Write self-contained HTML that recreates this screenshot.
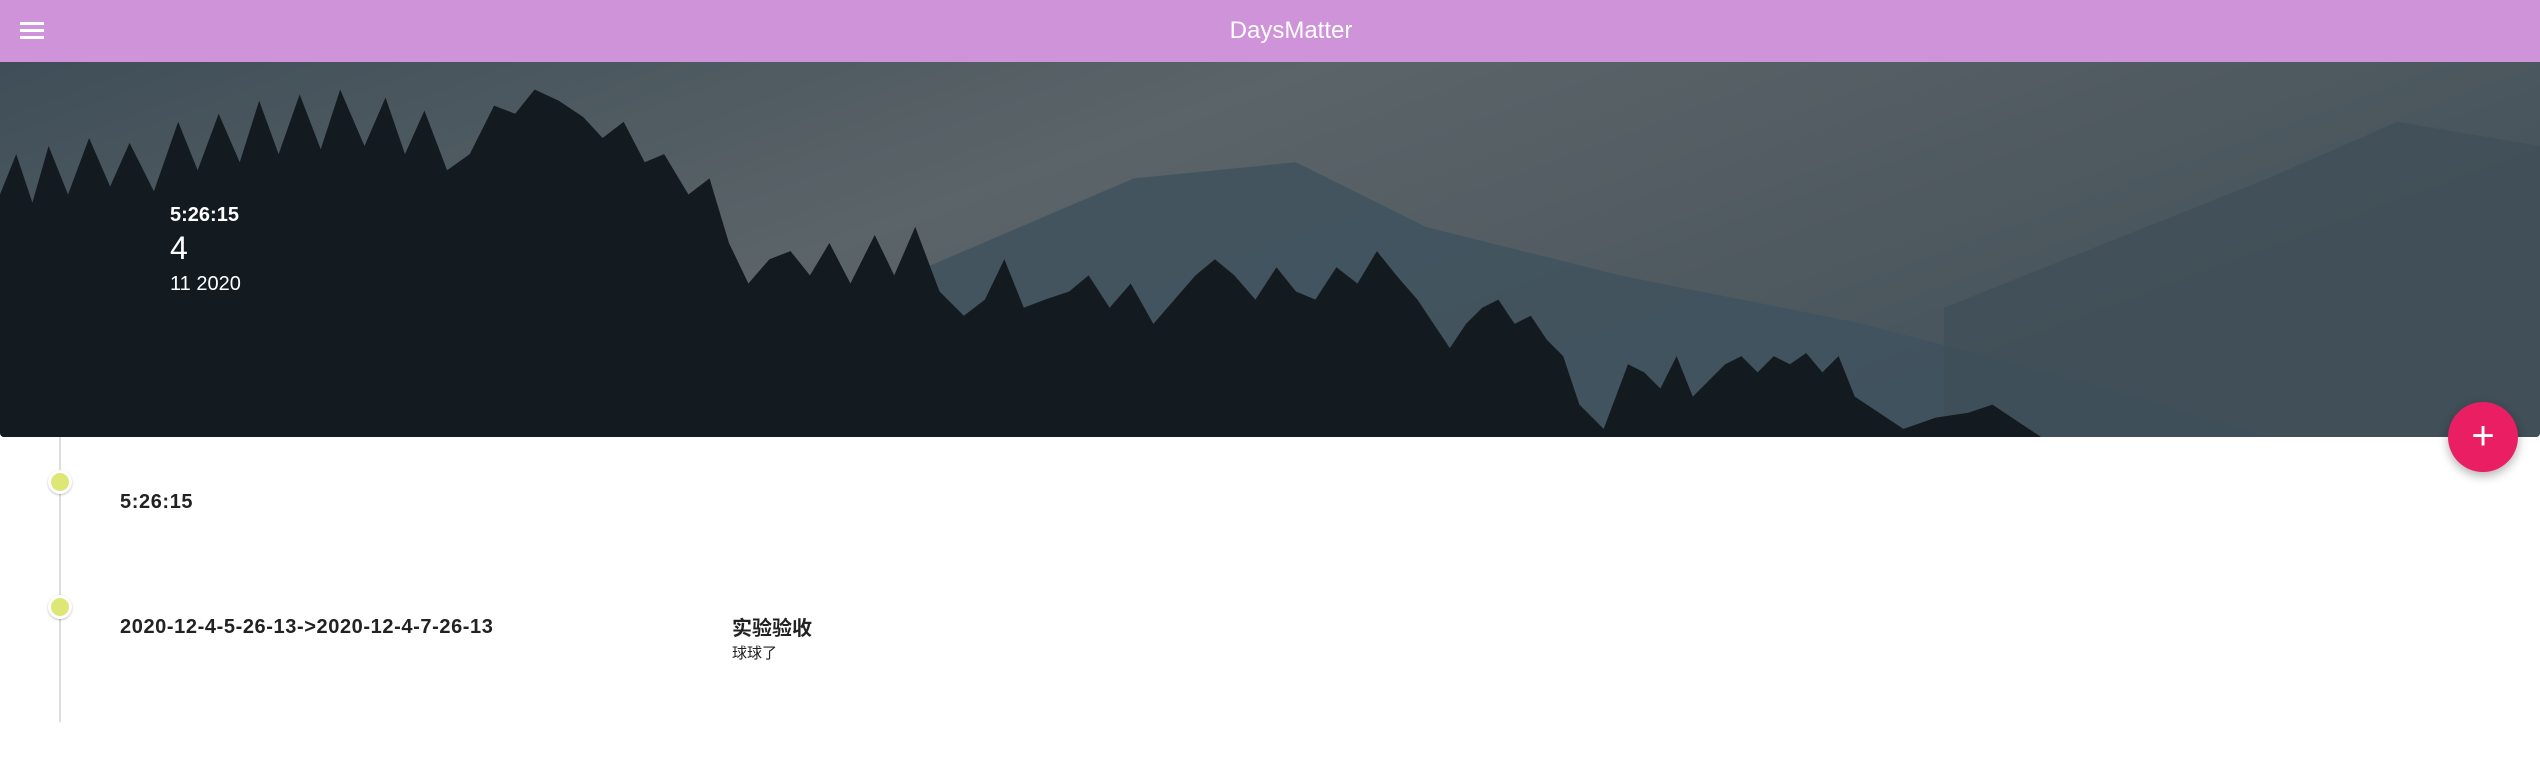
<!DOCTYPE html>
<html><head><meta charset="utf-8"><style>
*{margin:0;padding:0;box-sizing:border-box}
body{width:2540px;height:784px;background:#fff;font-family:"Liberation Sans","Noto Sans CJK SC",sans-serif;position:relative;overflow:hidden}
.bar{position:absolute;left:0;top:0;width:2540px;height:62px;background:#ce93d8;color:#fff}
.bar .t{position:absolute;left:42px;right:0;top:17px;text-align:center;font-size:24px}
.ham{position:absolute;left:20px;top:22px;width:24px}
.ham i{display:block;height:3px;background:#fff;margin-bottom:4px}
.hero{position:absolute;left:0;top:62px;width:2540px;height:375px;overflow:hidden;border-radius:0 0 4px 4px}
.ht{position:absolute;color:#fff;left:170px}
.line{position:absolute;left:59px;top:437px;width:2px;height:285px;background:#ddd}
.dot{position:absolute;left:48px;width:24px;height:24px;border-radius:50%;background:#dce775;border:3px solid #fff;box-shadow:0 1px 2px rgba(0,0,0,.25)}
.tx{position:absolute;font-size:20px;font-weight:bold;color:#222;letter-spacing:.6px}
.fab{position:absolute;left:2448px;top:402px;width:70px;height:70px;border-radius:50%;background:#e91e63;box-shadow:0 4px 10px rgba(0,0,0,.3);color:#fff;font-size:40px;text-align:center;line-height:68px}
</style></head><body>
<div class="hero">
<svg width="2540" height="375" viewBox="0 38 1568 232" preserveAspectRatio="none">
<defs><linearGradient id="s" x1="0" y1="0" x2="1" y2="0.4"><stop offset="0" stop-color="#3f4e58"/><stop offset=".45" stop-color="#5b6468"/><stop offset=".7" stop-color="#525c62"/><stop offset="1" stop-color="#46535b"/></linearGradient></defs>
<rect x="0" y="38" width="1568" height="232" fill="url(#s)"/>
<path d="M560 170 L700 110 L800 100 L880 140 L1000 170 L1150 200 L1300 240 L1400 270 L560 270Z" fill="#3f525e" opacity=".85"/>
<path d="M1200 190 L1300 150 L1400 110 L1480 75 L1568 90 L1568 270 L1200 270Z" fill="#3d4c56" opacity=".55"/>
<path d="M0 270 L0 120 L10 95 L20 125 L30 90 L42 120 L55 85 L68 115 L80 88 L95 118 L110 75 L122 105 L135 70 L148 100 L160 62 L172 95 L185 58 L198 92 L210 55 L225 90 L238 60 L250 95 L262 68 L276 105 L290 95 L305 65 L318 70 L330 55 L345 62 L360 72 L372 85 L385 75 L398 100 L410 95 L425 120 L438 110 L450 150 L462 175 L475 160 L488 155 L500 170 L512 150 L525 175 L540 145 L552 170 L565 140 L580 180 L595 195 L608 185 L620 160 L632 190 L645 185 L660 180 L672 170 L685 190 L698 175 L712 200 L725 185 L738 170 L750 160 L762 170 L775 185 L788 165 L800 180 L812 185 L825 165 L838 175 L850 155 L862 170 L875 185 L885 200 L895 215 L905 200 L915 190 L925 185 L935 200 L945 195 L955 210 L965 220 L975 250 L990 265 L1005 225 L1015 230 L1025 240 L1035 220 L1045 245 L1055 235 L1065 225 L1075 220 L1085 230 L1095 220 L1105 225 L1115 218 L1125 230 L1135 220 L1145 245 L1160 255 L1175 265 L1195 258 L1215 255 L1230 250 L1245 260 L1260 270Z" fill="#141b20"/>
</svg>
<div class="ht" style="top:142px;font-size:20px;font-weight:bold">5:26:15</div>
<div class="ht" style="top:168px;font-size:32px">4</div>
<div class="ht" style="top:211px;font-size:20px">11 2020</div>
</div>
<div class="bar"><div class="ham"><i></i><i></i><i></i></div><div class="t">DaysMatter</div></div>
<div class="line"></div>
<div class="dot" style="top:470px"></div>
<div class="dot" style="top:595px"></div>
<div class="tx" style="left:120px;top:491px">5:26:15</div>
<div class="tx" style="left:120px;top:616px">2020-12-4-5-26-13-&gt;2020-12-4-7-26-13</div>
<div class="tx" style="left:732px;top:612px;font-size:20px;letter-spacing:0">实验验收</div>
<div class="tx" style="left:732px;top:642px;font-size:15px;font-weight:normal;letter-spacing:0">球球了</div>
<div class="fab">+</div>
</body></html>
